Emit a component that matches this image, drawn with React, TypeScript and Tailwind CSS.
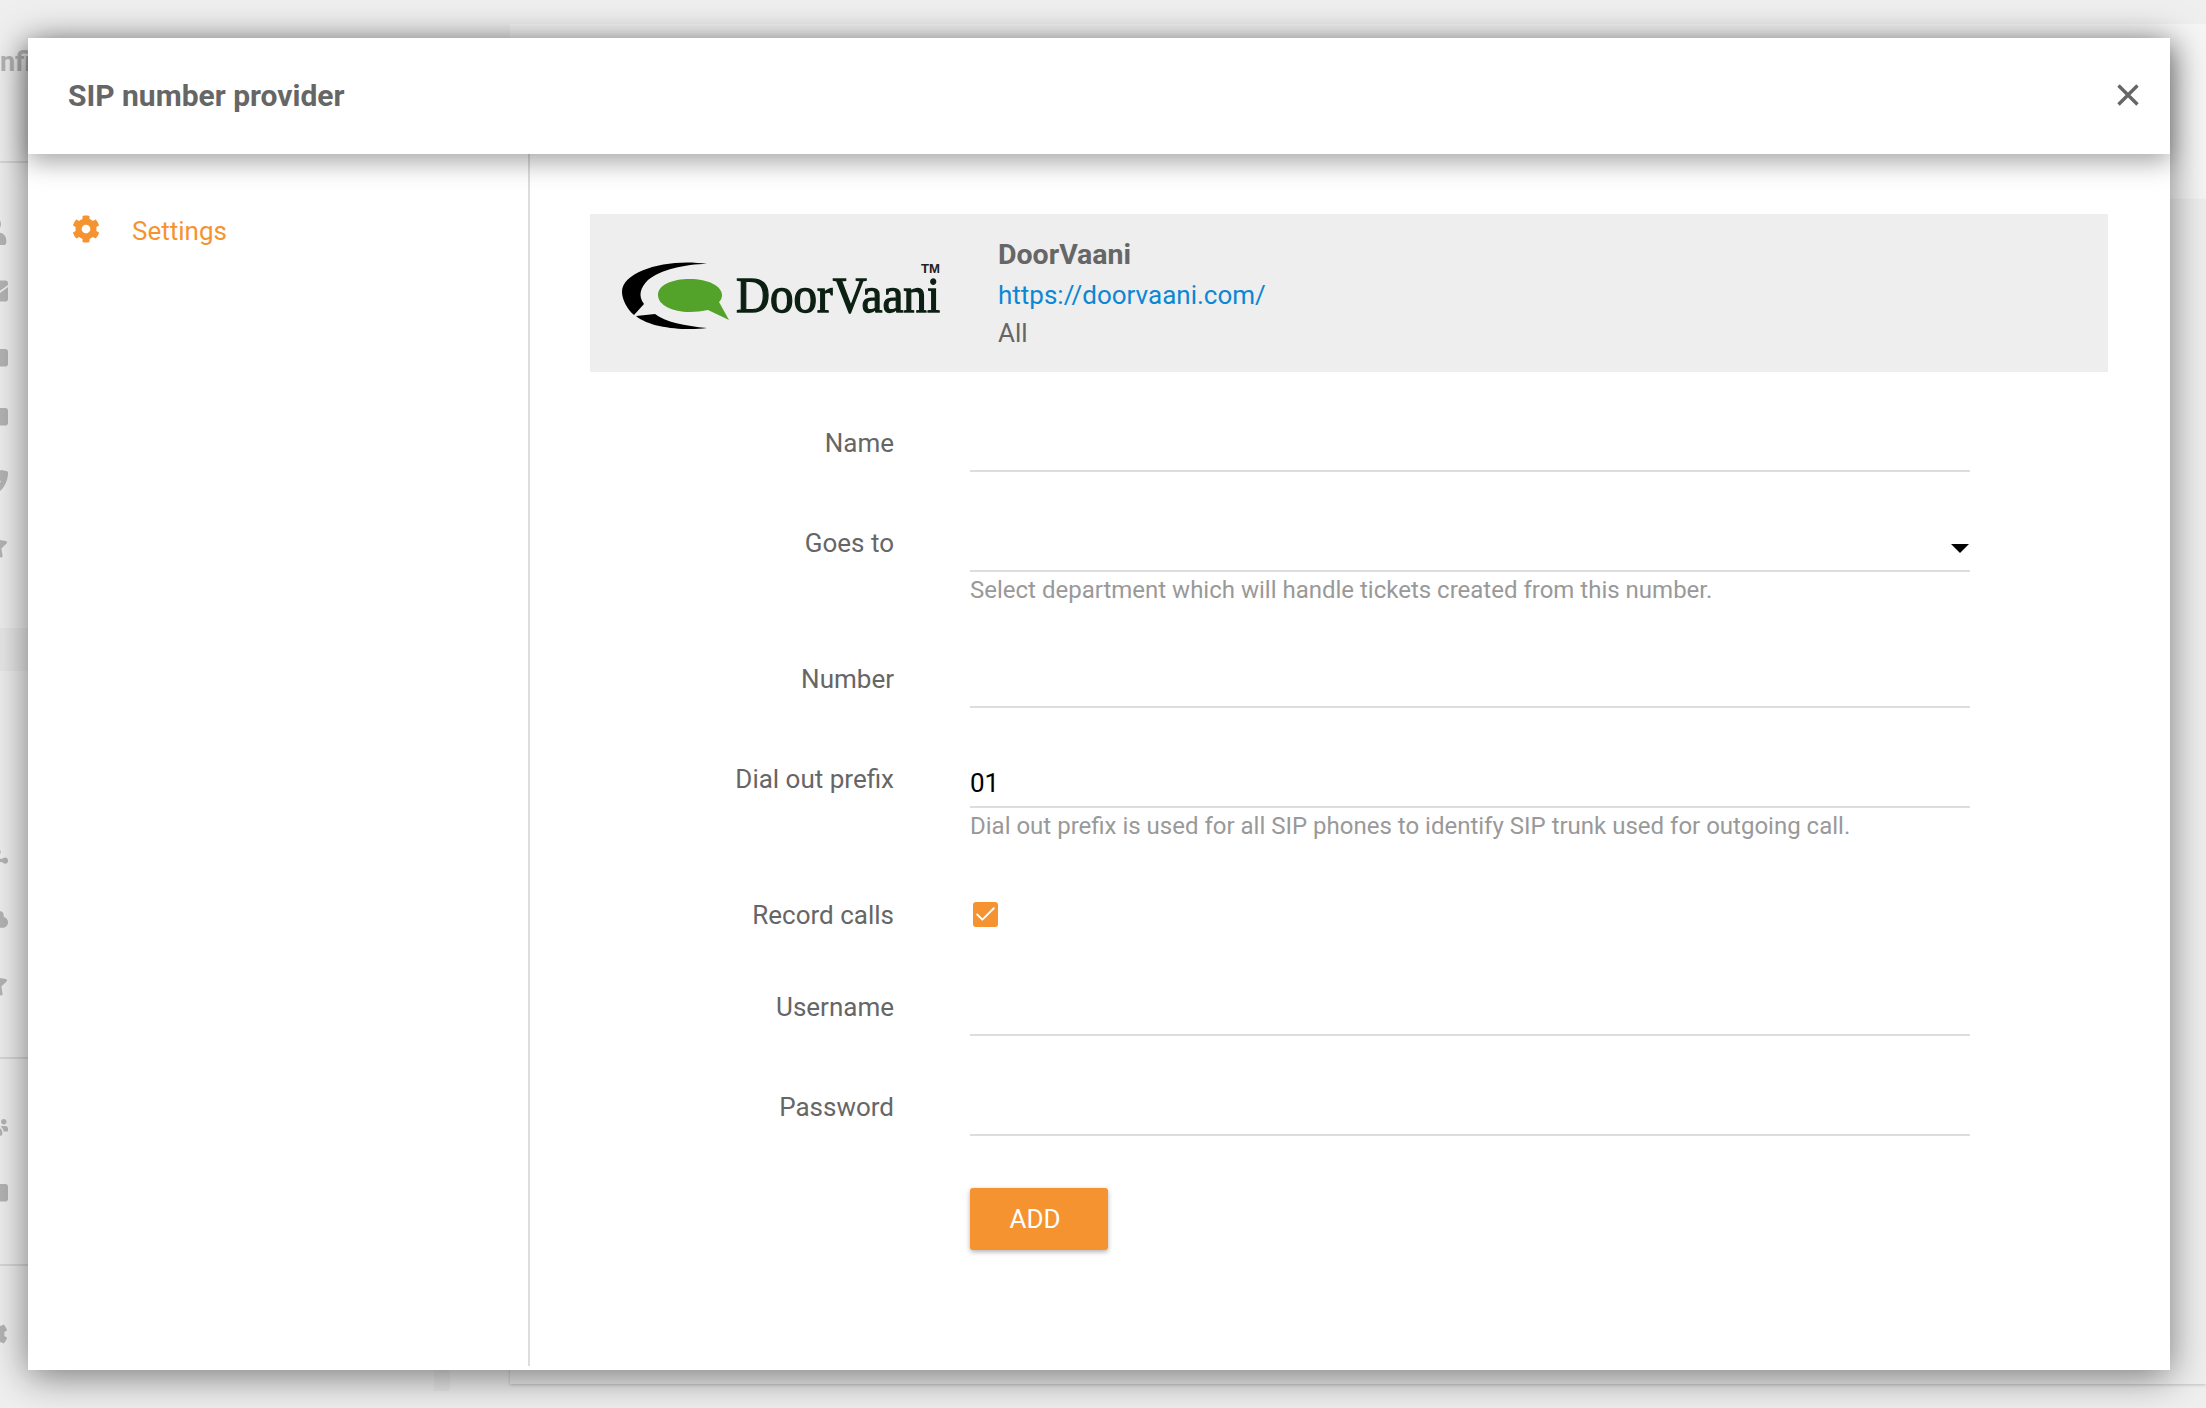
import { useState, type ReactNode } from 'react';
import { Check } from 'lucide-react';
import { FaCog, FaUser, FaStar, FaPhone, FaFolder, FaEnvelope, FaCloud, FaUsers, FaPuzzlePiece } from 'react-icons/fa';

const roboto = "font-['Roboto',sans-serif]";

// faded page behind the dialog, only a sliver of it shows
const sideIcons = [
  { top: 'mt-[54px]', icon: <FaUser size={28} /> },
  { top: 'mt-[32px]', icon: <FaEnvelope size={28} /> },
  { top: 'mt-[37px]', icon: <FaFolder size={28} /> },
  { top: 'mt-[31px]', icon: <FaFolder size={28} /> },
  { top: 'mt-[41px]', icon: <FaPhone size={28} /> },
  { top: 'mt-[33px]', icon: <FaStar size={28} /> },
];

function BackgroundPage() {
  return (
    <div className="relative flex h-[1408px] bg-[#efefef]">
      <aside className="w-[510px] shrink-0 overflow-hidden text-[#b4b4b4]">
        <div className={`mt-[44px] -ml-[33px] text-[27px] leading-9 font-bold whitespace-nowrap ${roboto}`}>Configuration</div>
        <div className="mt-[81px] h-[2px] bg-[#d8d8d8]" />
        <div className="-ml-[20px] flex flex-col">
          {sideIcons.map((item, i) => (
            <div key={i} className={item.top}>
              {item.icon}
            </div>
          ))}
        </div>
        <div className="mt-[69px] h-[43px] bg-[#e8e8e8]" />
        <div className="-ml-[20px] flex flex-col">
          <div className="mt-[171px]"><FaPuzzlePiece size={28} /></div>
          <div className="mt-[34px]"><FaCloud size={28} /></div>
          <div className="mt-[37px]"><FaStar size={28} /></div>
        </div>
        <div className="mt-[60px] h-[2px] bg-[#d8d8d8]" />
        <div className="-ml-[20px] flex flex-col">
          <div className="mt-[53px]"><FaUsers size={28} /></div>
          <div className="mt-[37px]"><FaFolder size={28} /></div>
        </div>
        <div className="mt-[59px] h-[2px] bg-[#d8d8d8]" />
        <div className="-ml-[20px] mt-[54px]"><FaCog size={28} /></div>
      </aside>
      <div className="absolute bottom-[17px] left-[434px] h-[40px] w-[16px] bg-[#e8e8e8]" />
      <main className="flex-1 pt-[24px]">
        <div className="h-[176px] bg-[#f6f6f6]" />
        <div className="h-[1184px] bg-[#efefef] shadow-[0_1px_3px_rgba(0,0,0,0.2)]" />
      </main>
    </div>
  );
}

function DoorVaaniLogo() {
  return (
    <svg width="345" height="110" viewBox="0 0 345 110" className="mt-[4px] shrink-0">
      <path d="M107 24C70 18 22 30 22 52C22 60 28 70 34 75L44 64C38 56 40 48 48 40C60 30 85 24 107 24Z" fill="#000" />
      <path d="M36 76L55 74C65 82 85 86 107 88C85 91 50 88 36 76Z" fill="#000" />
      <path d="M58 55C58 45 72 39 90 39C108 39 122 46 122 55C122 58 121 60 119 62L129 80L108 70C102 71 96 72 90 72C72 72 58 65 58 55Z" fill="#53a32b" />
      <text x="136" y="72" textLength="204" lengthAdjust="spacingAndGlyphs" fontFamily="'Liberation Serif', serif" fontSize="51" stroke="#0b1f12" strokeWidth="1.3" fill="#0b1f12">
        DoorVaani
      </text>
      <text x="321" y="33" textLength="19" lengthAdjust="spacingAndGlyphs" fontFamily="'Liberation Sans', sans-serif" fontWeight="700" fontSize="12" fill="#222">
        TM
      </text>
    </svg>
  );
}

function Row({ label, help, children, className = 'mb-[48px]' }: { label: string; help?: string; children: ReactNode; className?: string }) {
  return (
    <div className={`flex ${className}`}>
      <label className="w-[304px] shrink-0 text-right text-[26px] leading-[46px] text-[#666]">{label}</label>
      <div className="ml-[76px] w-[1000px]">
        {children}
        {help && <p className="text-[24px] leading-[36px] text-[#999]">{help}</p>}
      </div>
    </div>
  );
}

function TextField({ value }: { value?: string }) {
  return (
    <input
      defaultValue={value}
      className="block h-[52px] w-full border-b-2 border-[#dddddd] bg-transparent pt-[4px] text-[26px] text-black outline-none"
    />
  );
}

export default function App() {
  const [record, setRecord] = useState(true);

  return (
    <div className={`relative h-[1408px] w-full overflow-hidden ${roboto}`}>
      <BackgroundPage />

      <div className="absolute top-[38px] left-[28px] flex h-[1332px] w-[2142px] flex-col bg-white shadow-[0_6px_36px_rgba(0,0,0,0.5)]">
        <header className="relative z-10 flex h-[116px] shrink-0 items-center justify-between bg-white pr-[31px] pl-[40px] shadow-[0_8px_24px_rgba(0,0,0,0.35)]">
          <h1 className="-mt-[2px] text-[30px] font-bold text-[#666]">SIP number provider</h1>
          <button className="-mt-[2px] text-[#666]">
            <svg width="22" height="22" viewBox="0 0 22 22" className="block">
              <path d="M1.5 1.5L20.5 20.5M20.5 1.5L1.5 20.5" stroke="currentColor" strokeWidth="3.4" />
            </svg>
          </button>
        </header>

        <div className="flex min-h-0 flex-1">
          <nav className="mb-[4px] w-[502px] shrink-0 border-r-2 border-[#dddddd] pt-[59px] pl-[44px]">
            <a className="flex items-center text-[26px] leading-[36px] text-[#f69331]">
              <FaCog size={28} className="-mt-[4px]" />
              <span className="ml-[32px]">Settings</span>
            </a>
          </nav>

          <section className="flex-1 pt-[60px] pr-[62px] pl-[60px]">
            <div className="flex h-[158px] items-center bg-[#eeeeee]">
              <div className="ml-[10px]">
                <DoorVaaniLogo />
              </div>
              <div className="ml-[53px] -mt-[1px]">
                <div className="text-[28.5px] leading-[42px] font-bold text-[#666]">DoorVaani</div>
                <a href="#" className="block text-[26px] leading-[38px] text-[#0c87d4]">https://doorvaani.com/</a>
                <div className="text-[26px] leading-[38px] text-[#666]">All</div>
              </div>
            </div>

            <form className="pt-[48px]">
              <Row label="Name"><TextField /></Row>
              <Row label="Goes to" help="Select department which will handle tickets created from this number.">
                <div className="relative">
                  <TextField />
                  <span className="absolute top-[24px] right-[1px] h-0 w-0 border-x-[9px] border-t-[9px] border-x-transparent border-t-black" />
                </div>
              </Row>
              <Row label="Number"><TextField /></Row>
              <Row label="Dial out prefix" help="Dial out prefix is used for all SIP phones to identify SIP trunk used for outgoing call.">
                <TextField value="01" />
              </Row>
              <Row label="Record calls" className="mb-[46px]">
                <button
                  type="button"
                  onClick={() => setRecord(!record)}
                  className="mt-[10px] ml-[3px] flex h-[25px] w-[25px] items-center justify-center rounded-[3px] bg-[#f69331] text-white"
                >
                  {record && <Check size={25} strokeWidth={1.7} />}
                </button>
              </Row>
              <Row label="Username"><TextField /></Row>
              <Row label="Password" className="mb-[52px]"><TextField /></Row>
              <div className="ml-[380px]">
                <button type="button" className="h-[62px] w-[138px] rounded-[3px] bg-[#f69331] pr-[8px] text-[26px] text-white shadow-[0_2px_5px_rgba(0,0,0,0.3)]">
                  ADD
                </button>
              </div>
            </form>
          </section>
        </div>
      </div>
    </div>
  );
}
